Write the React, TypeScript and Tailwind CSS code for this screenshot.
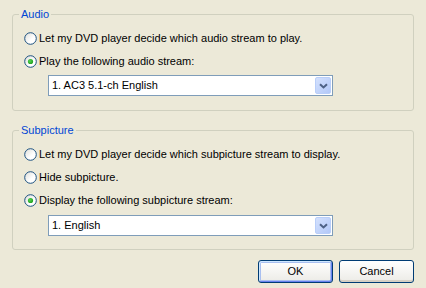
function Radio({ checked }: { checked?: boolean }) {
  return (
    <svg width="13" height="13" viewBox="0 0 13 13" className="shrink-0">
      <defs>
        <linearGradient id="rfill" x1="0" y1="0" x2="1" y2="1">
          <stop offset="0" stopColor="#DCDCD7" />
          <stop offset="0.6" stopColor="#FFFFFF" />
        </linearGradient>
        <radialGradient id="rdot" cx="0.4" cy="0.4" r="0.6">
          <stop offset="0" stopColor="#55D551" />
          <stop offset="1" stopColor="#21A121" />
        </radialGradient>
      </defs>
      <circle cx="6.5" cy="6.5" r="5.8" fill="url(#rfill)" stroke="#1C5180" strokeWidth="1" />
      {checked && <circle cx="6.5" cy="6.5" r="2.6" fill="url(#rdot)" />}
    </svg>
  );
}

function Option({ label, checked }: { label: string; checked?: boolean }) {
  return (
    <div className="flex h-[23px] items-center gap-[2px]">
      <Radio checked={checked} />
      <span>{label}</span>
    </div>
  );
}

function Combo({ value }: { value: string }) {
  return (
    <div className="ml-[24px] flex h-[21px] w-[285px] items-stretch border border-[#7F9DB9] bg-white">
      <div className="flex flex-1 items-center pl-[3px]">{value}</div>
      <div className="my-[1px] mr-[1px] flex w-[16px] items-center justify-center rounded-[2px] border border-[#B9CEF9] bg-linear-to-br from-[#D4E1FD] to-[#B2C8F8]">
        <svg width="9" height="6" viewBox="0 0 9 6">
          <path d="M1 1.2 L4.5 4.5 L8 1.2" fill="none" stroke="#4D6185" strokeWidth="2" />
        </svg>
      </div>
    </div>
  );
}

function Group({ title, children, className }: { title: string; children: React.ReactNode; className?: string }) {
  return (
    <fieldset className={`rounded-[3px] border border-[#D0D0BF] pl-[11px] pt-[6px] ${className ?? ""}`}>
      <legend className="-ml-[5px] px-[2px] leading-[13px] text-[#0046D5]">{title}</legend>
      {children}
    </fieldset>
  );
}

export default function App() {
  return (
    <div className="h-[288px] w-[426px] bg-[#ECE9D8] px-[12px] pt-[8px] font-['Liberation_Sans',sans-serif] text-[11px] leading-[13px] text-black">
      <Group title="Audio" className="pb-[14px]">
        <Option label="Let my DVD player decide which audio stream to play." />
        <Option label="Play the following audio stream:" checked />
        <div className="mt-[2px]">
          <Combo value="1. AC3 5.1-ch English" />
        </div>
      </Group>

      <Group title="Subpicture" className="mt-[13px] pb-[13px]">
        <Option label="Let my DVD player decide which subpicture stream to display." />
        <Option label="Hide subpicture." />
        <Option label="Display the following subpicture stream:" checked />
        <div className="mt-[3px]">
          <Combo value="1. English" />
        </div>
      </Group>

      <div className="mt-[10px] flex justify-end gap-[6px]">
        <button className="h-[23px] w-[75px] rounded-[3px] border border-[#003C74] bg-linear-to-b from-white to-[#ECEBE6] shadow-[inset_1px_1px_0_#CEE7FF,inset_-1px_-1px_0_#6982EE,inset_0_0_0_2px_#A9BFF0]">
          OK
        </button>
        <button className="h-[23px] w-[75px] rounded-[3px] border border-[#003C74] bg-linear-to-b from-white to-[#ECEBE6] shadow-[inset_0_-2px_0_#D6D0C5]">
          Cancel
        </button>
      </div>
    </div>
  );
}
